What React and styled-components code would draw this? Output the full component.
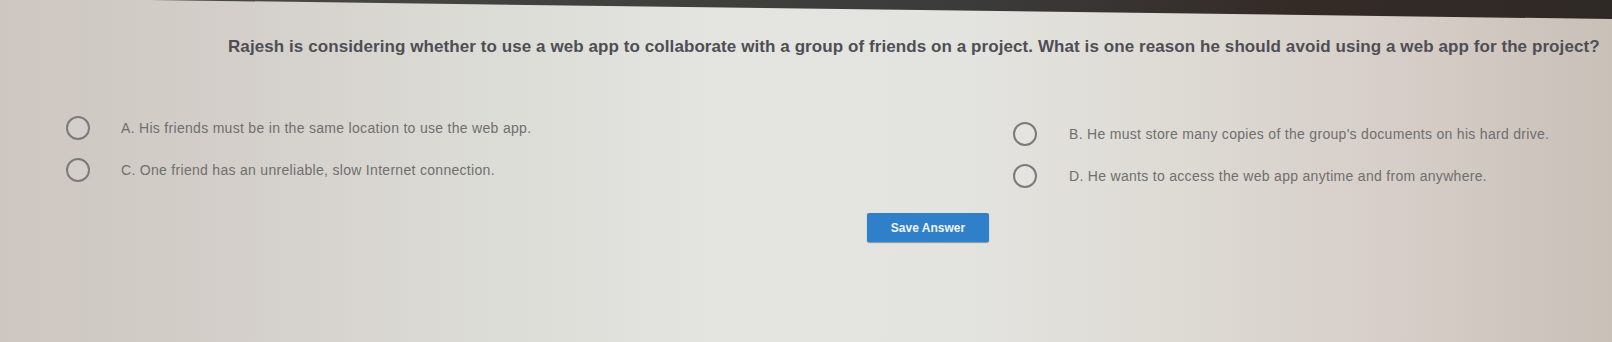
import React from 'react';
import styled, { createGlobalStyle } from 'styled-components';

const GlobalStyle = createGlobalStyle`
	html, body {
		margin: 0;
		padding: 0;
	}
	body {
		min-height: 342px;
		font-family: 'Liberation Sans', Arial, sans-serif;
		background: linear-gradient(
			90deg,
			#cdc6c1 0%,
			#d4cfca 15%,
			#dcdcd6 30%,
			#e4e4e1 45%,
			#e3e3df 60%,
			#dedbd5 72%,
			#d8d0ca 84%,
			#c9c1b8 100%
		);
		overflow: hidden;
	}
`;

const Bezel = styled.div`
	height: 19px;
	background: linear-gradient(90deg, #4a4a48 0%, #3b3b3b 60%, #342b27 80%, #2f2925 100%);
	clip-path: polygon(150px 0, 100% 0, 100% 19px);
`;

const Page = styled.main`
	display: flex;
	flex-direction: column;
`;

const Question = styled.h1`
	margin: 18px 0 0 228px;
	font-size: 17px;
	line-height: 20px;
	font-weight: 700;
	color: #4e4f55;
	letter-spacing: 0.08px;
	white-space: nowrap;
`;

const Options = styled.div`
	margin-top: 59px;
	padding-left: 66px;
	display: grid;
	grid-template-columns: 947px 1fr;
`;

const Column = styled.div`
	display: flex;
	flex-direction: column;
	gap: ${(p) => p.$gap}px;
	padding-top: ${(p) => p.$offset}px;
`;

const Option = styled.label`
	display: flex;
	align-items: center;
	gap: ${(p) => p.$gap}px;
	height: 24px;
	cursor: pointer;
`;

const Radio = styled.span`
	flex: none;
	width: 24px;
	height: 24px;
	box-sizing: border-box;
	border-radius: 50%;
	border: 2px solid #7b7b7b;
	background: rgba(255, 255, 255, 0.12);
`;

const OptionText = styled.span`
	font-size: 14px;
	letter-spacing: 0.3px;
	color: #6f6f6f;
	white-space: nowrap;
`;

const SaveButton = styled.button`
	margin: 25px 0 0 867px;
	width: 122px;
	height: 29px;
	border: none;
	border-radius: 2px;
	background: #2f80c8;
	color: #eef4fb;
	font-family: 'Liberation Sans', Arial, sans-serif;
	font-size: 12px;
	font-weight: 700;
	align-self: flex-start;
	box-shadow: 0 1px 1px rgba(40, 70, 110, 0.5);
	cursor: pointer;
`;

const left = [
	'A. His friends must be in the same location to use the web app.',
	'C. One friend has an unreliable, slow Internet connection.',
];

const right = [
	"B. He must store many copies of the group's documents on his hard drive.",
	'D. He wants to access the web app anytime and from anywhere.',
];

const App = () => {
	const renderColumn = (items, offset, gap) => (
		<Column $offset={offset} $gap={18}>
			{items.map((text) => (
				<Option key={text} $gap={gap}>
					<Radio />
					<OptionText>{text}</OptionText>
				</Option>
			))}
		</Column>
	);

	return (
		<>
			<GlobalStyle />
			<Bezel />
			<Page>
				<Question>
					Rajesh is considering whether to use a web app to collaborate with a group of
					friends on a project. What is one reason he should avoid using a web app for the
					project?
				</Question>
				<Options>
					{renderColumn(left, 0, 31)}
					{renderColumn(right, 6, 32)}
				</Options>
				<SaveButton>Save Answer</SaveButton>
			</Page>
		</>
	);
};

export default App;
